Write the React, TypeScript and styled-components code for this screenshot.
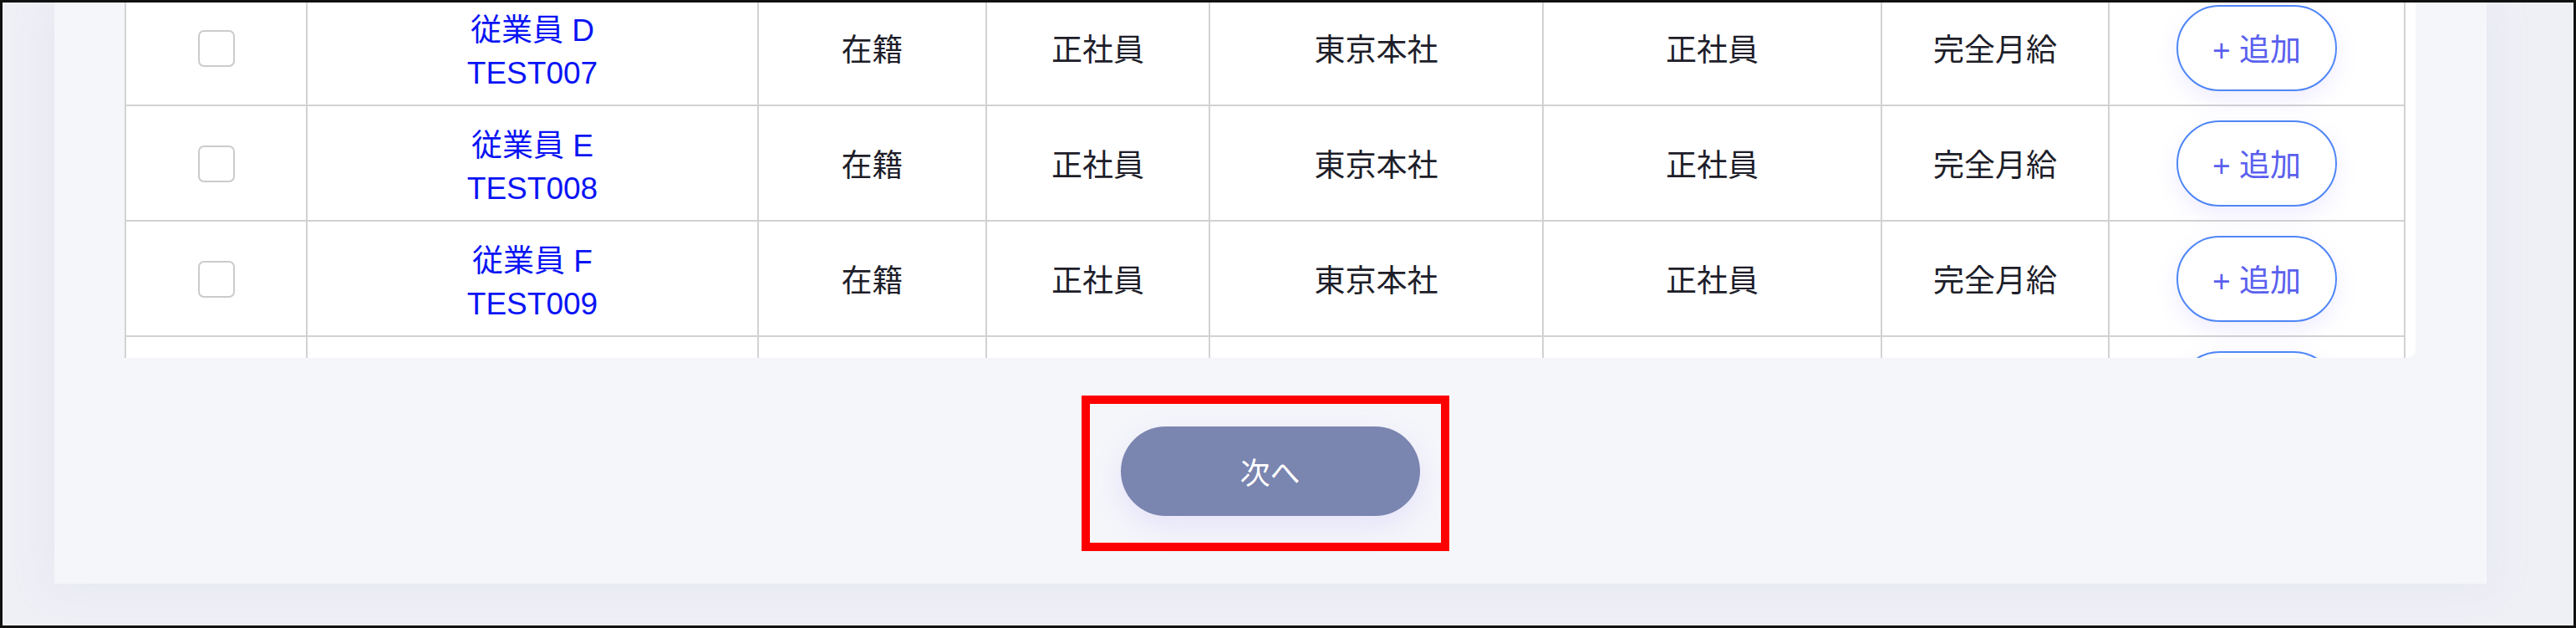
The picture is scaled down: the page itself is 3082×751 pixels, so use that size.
import React, { useLayoutEffect, useRef } from 'react'
import styled, { createGlobalStyle } from 'styled-components'

type Employee = {
    name: string
    code: string
    status: string
    contract: string
    office: string
    position: string
    pay: string
}

const employees: Employee[] = [
    { name: '従業員 D', code: 'TEST007', status: '在籍', contract: '正社員', office: '東京本社', position: '正社員', pay: '完全月給' },
    { name: '従業員 E', code: 'TEST008', status: '在籍', contract: '正社員', office: '東京本社', position: '正社員', pay: '完全月給' },
    { name: '従業員 F', code: 'TEST009', status: '在籍', contract: '正社員', office: '東京本社', position: '正社員', pay: '完全月給' },
    { name: '従業員 G', code: 'TEST010', status: '在籍', contract: '正社員', office: '東京本社', position: '正社員', pay: '完全月給' },
]

const columnWidths = [217, 540, 273, 267, 399, 405, 272, 354]

const App: React.FC = () => {
    const scrollRef = useRef<HTMLDivElement>(null)

    // the list is shown part way down, as in the captured state
    useLayoutEffect(() => {
        if (scrollRef.current) scrollRef.current.scrollTop = 16
    }, [])

    return (
        <>
            <GlobalStyle />
            <Frame>
                <Card>
                    <ScrollArea ref={scrollRef}>
                        <Table>
                            <colgroup>
                                {columnWidths.map((w, i) => (
                                    <col key={i} style={{ width: w }} />
                                ))}
                            </colgroup>
                            <tbody>
                                {employees.map((e) => (
                                    <Row key={e.code}>
                                        <Cell>
                                            <Checkbox type="checkbox" aria-label={e.name} />
                                        </Cell>
                                        <NameCell>
                                            <NameLink>{e.name}</NameLink>
                                            <NameLink>{e.code}</NameLink>
                                        </NameCell>
                                        <Cell>{e.status}</Cell>
                                        <Cell>{e.contract}</Cell>
                                        <Cell>{e.office}</Cell>
                                        <Cell>{e.position}</Cell>
                                        <Cell>{e.pay}</Cell>
                                        <Cell>
                                            <AddButton>+ 追加</AddButton>
                                        </Cell>
                                    </Row>
                                ))}
                            </tbody>
                        </Table>
                    </ScrollArea>
                    <Footer>
                        <NextWrap>
                            <NextButton>次へ</NextButton>
                            <Highlight />
                        </NextWrap>
                    </Footer>
                </Card>
            </Frame>
        </>
    )
}

const GlobalStyle = createGlobalStyle`
    html, body {
        margin: 0;
        padding: 0;
    }
    body {
        font-family: "Liberation Sans", "Noto Sans CJK JP", sans-serif;
        background: #eef0f6;
    }
`

const Frame = styled.div`
    width: 3082px;
    height: 751px;
    box-sizing: border-box;
    border: 3px solid #111;
    background: #eff0f6;
    overflow: hidden;
`

const Card = styled.div`
    margin-left: 62px;
    width: 2910px;
    height: 695px;
    box-sizing: border-box;
    padding: 0 85px 0 84px;
    background: #f5f6fa;
    box-shadow: 0 0 40px rgba(205, 210, 230, 0.35);
    display: flex;
    flex-direction: column;
`

const ScrollArea = styled.div`
    height: 425px;
    overflow: hidden;
    background: #fff;
    padding-right: 14px;
    border-bottom-right-radius: 10px;
`

const Table = styled.table`
    width: 2727px;
    table-layout: fixed;
    border-collapse: collapse;
`

const Row = styled.tr`
    height: 138px;
`

const Cell = styled.td`
    border: 2px solid #d2d2d2;
    padding: 0;
    text-align: center;
    vertical-align: middle;
    font-size: 37px;
    color: #1e1e2a;
`

const NameCell = styled(Cell)`
    padding-top: 10px;
`

const NameLink = styled.a`
    display: block;
    color: #0a14f4;
    line-height: 51px;
    cursor: pointer;
`

const Checkbox = styled.input`
    appearance: none;
    margin: 0;
    width: 44px;
    height: 44px;
    border: 2.5px solid #cbcbcb;
    border-radius: 7px;
    background: #fff;
    vertical-align: middle;
    box-sizing: border-box;
`

const AddButton = styled.button`
    width: 192px;
    height: 103px;
    border: 2.5px solid #4f86f7;
    border-radius: 999px;
    background: #fff;
    color: #5a60ee;
    font-family: inherit;
    font-size: 37px;
    box-shadow: 0 10px 26px rgba(150, 125, 255, 0.14);
    cursor: pointer;
`

const Footer = styled.div`
    flex: 1;
    display: flex;
    align-items: center;
    justify-content: center;
`

const NextWrap = styled.div`
    position: relative;
`

const NextButton = styled.button`
    width: 358px;
    height: 107px;
    border: none;
    border-radius: 999px;
    background: #7a85b0;
    color: #fff;
    font-family: inherit;
    font-size: 36px;
    box-shadow: 0 12px 34px rgba(150, 125, 255, 0.16);
    cursor: pointer;
`

const Highlight = styled.div`
    position: absolute;
    top: -37px;
    left: -47px;
    right: -35px;
    bottom: -42px;
    border: 10px solid #ff0000;
    pointer-events: none;
`

export default App
